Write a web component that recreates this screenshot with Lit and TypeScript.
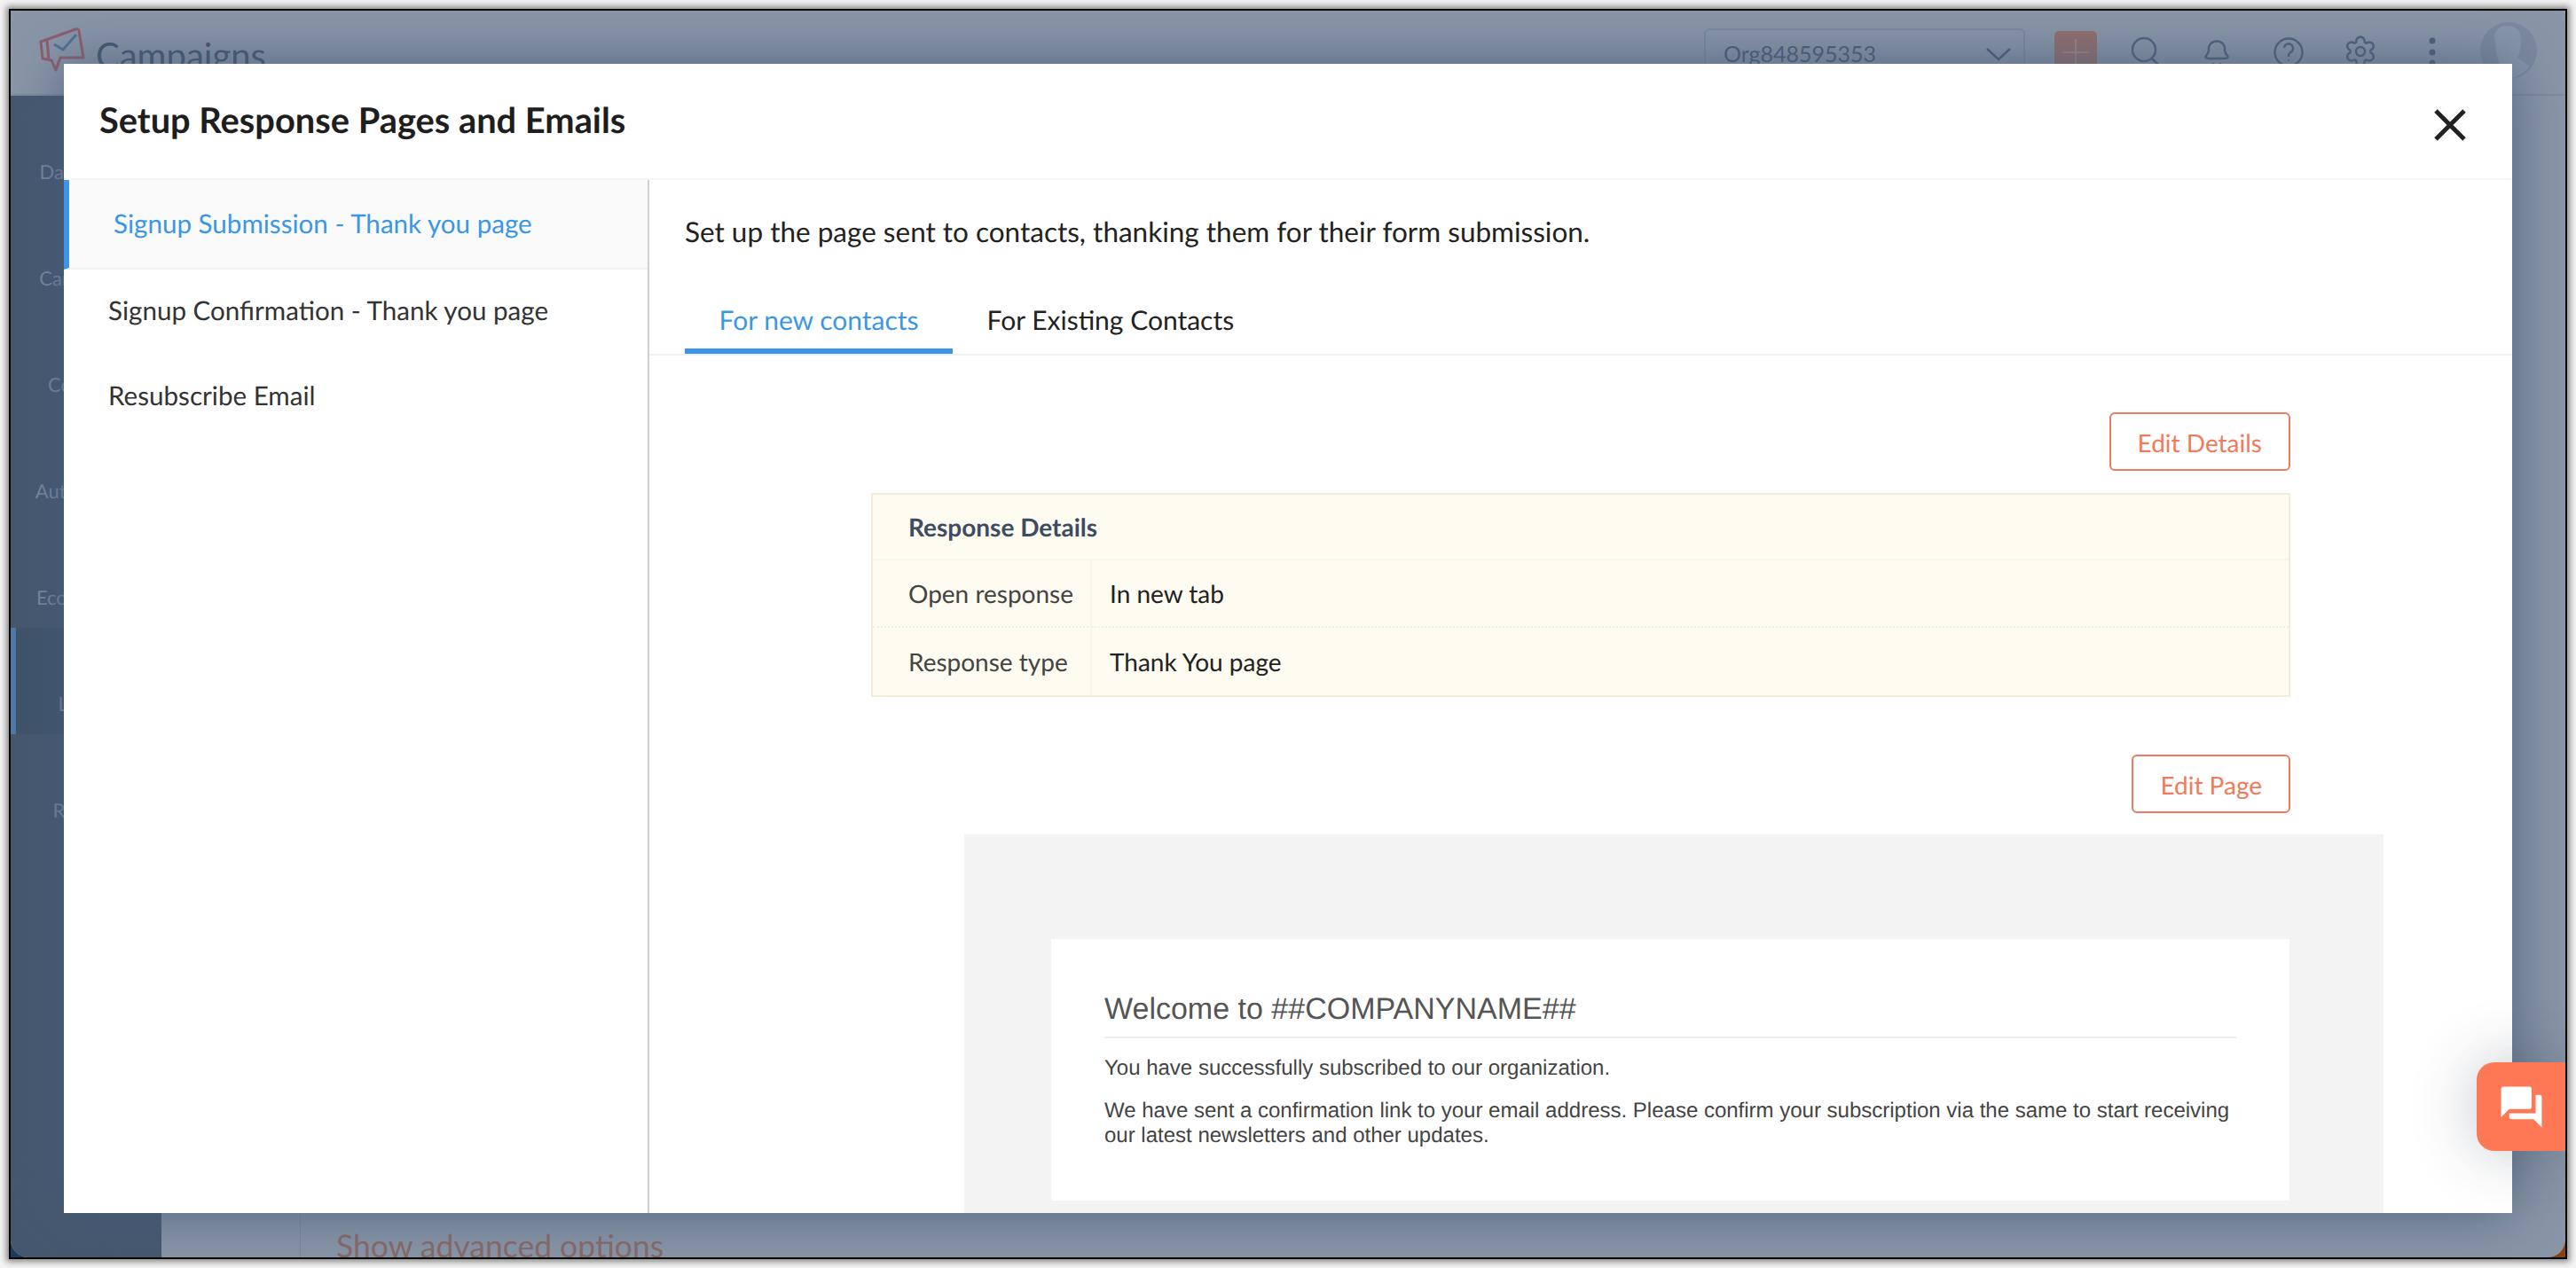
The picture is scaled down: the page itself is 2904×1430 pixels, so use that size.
import { html, css, svg, LitElement } from 'lit';
import { customElement } from 'lit/decorators.js';

const NAV = [
  { label: 'Dashboard' },
  { label: 'Campaigns' },
  { label: 'Contacts' },
  { label: 'Automation' },
  { label: 'Ecommerce' },
  { label: 'Leads', active: true },
  { label: 'Reports' },
];

const PAGES = [
  { label: 'Signup Submission - Thank you page', active: true },
  { label: 'Signup Confirmation - Thank you page' },
  { label: 'Resubscribe Email' },
];

// six lobed cog outline, centred in a 48 box
function gearPath(): string {
  const pts: string[] = [];
  const cx = 24;
  const cy = 23;
  for (let i = 0; i < 6; i++) {
    const a = (i * Math.PI) / 3 - Math.PI / 2;
    const at = (r: number, off: number) =>
      `${(cx + r * Math.cos(a + off)).toFixed(1)} ${(cy + r * Math.sin(a + off)).toFixed(1)}`;
    pts.push(`${i === 0 ? 'M' : 'L'}${at(11.5, -0.42)}`);
    pts.push(`Q${at(16.5, -0.3)} ${at(16.5, 0)}`);
    pts.push(`Q${at(16.5, 0.3)} ${at(11.5, 0.42)}`);
  }
  return pts.join(' ') + ' Z';
}

@customElement('app-root')
export class AppRoot extends LitElement {
  static override styles = css`
    :host {
      display: block;
      width: 2904px;
      height: 1430px;
      background: #f4f4f4;
      font-family: 'Lato', 'Liberation Sans', sans-serif;
      text-rendering: geometricPrecision;
      overflow: hidden;
    }

    .frame {
      width: 2880px;
      height: 1406px;
      margin: 10px;
      border: 2px solid #000;
      box-shadow: 0 0 7px 3px rgba(0, 0, 0, 0.45);
      background: linear-gradient(90deg, #1c3a5c 50%, #8a4212 50%);
    }

    .window {
      position: relative;
      display: flex;
      flex-direction: column;
      width: 100%;
      height: 100%;
      overflow: hidden;
      border-radius: 0 0 20px 20px;
      background: #8a96a8;
    }

    /* dimmed app behind the dialog */
    .topbar {
      flex: none;
      box-sizing: border-box;
      display: flex;
      align-items: center;
      height: 96px;
      padding: 0 32px;
      border-bottom: 2px solid #7d8a9e;
    }

    .logo {
      width: 56px;
      height: 56px;
      margin-right: 8px;
    }

    .brand {
      font-size: 40px;
      color: #45576f;
      margin-top: 6px;
    }

    .org {
      box-sizing: border-box;
      display: flex;
      align-items: center;
      justify-content: space-between;
      width: 362px;
      height: 54px;
      margin-left: auto;
      margin-right: 33px;
      padding: 4px 13px 0 20px;
      border: 2px solid #7d8a9f;
      border-radius: 6px;
      font-size: 25px;
      color: #4c5d76;
    }

    .plus {
      display: flex;
      width: 48px;
      height: 48px;
      margin-right: 13px;
      border-radius: 5px;
      background: #936f6c;
    }

    .cell {
      display: flex;
      justify-content: center;
      width: 81px;
    }

    .cell svg {
      width: 48px;
      height: 48px;
    }

    .avatar {
      width: 64px;
      height: 64px;
      margin-left: 14px;
      margin-top: -4px;
    }

    .below {
      flex: 1;
      display: flex;
      min-height: 0;
    }

    .nav {
      flex: none;
      width: 170px;
      background: #46586f;
    }

    .nav-item {
      box-sizing: border-box;
      display: flex;
      align-items: flex-end;
      justify-content: center;
      height: 120px;
      padding-bottom: 21px;
      font-size: 22px;
      color: #7c8aa0;
    }

    .nav-item.active {
      padding-right: 8px;
      background: #3f5369;
      box-shadow: inset 6px 0 0 #4f7aa8;
    }

    .main {
      flex: 1;
      display: flex;
      padding-left: 156px;
    }

    .main-inner {
      flex: 1;
      display: flex;
      align-items: flex-end;
      padding-left: 40px;
      border-left: 1px solid #7d899c;
      margin-bottom: -12px;
    }

    .advanced {
      font-size: 35.5px;
      line-height: 50px;
      color: #8a6a66;
    }

    /* dialog */
    .modal {
      position: absolute;
      left: 60px;
      top: 60px;
      display: flex;
      flex-direction: column;
      width: 2760px;
      height: 1296px;
      overflow: hidden;
      background: #fff;
    }

    .shadow {
      position: absolute;
      left: 60px;
      top: 60px;
      width: 2760px;
      height: 1296px;
      box-shadow: 0 0 60px rgba(70, 90, 120, 0.85);
    }

    .modal-head {
      flex: none;
      display: flex;
      align-items: center;
      justify-content: space-between;
      box-sizing: border-box;
      height: 131px;
      padding: 0 50px 0 40px;
      border-bottom: 2px solid #f3f5f6;
    }

    .modal-title {
      font-size: 39.8px;
      font-weight: 700;
      color: #1e1e1e;
      margin-bottom: 2px;
    }

    .close {
      width: 40px;
      height: 40px;
      margin-top: 8px;
    }

    .modal-body {
      flex: 1;
      display: flex;
      min-height: 0;
    }

    .pages {
      flex: none;
      box-sizing: border-box;
      width: 660px;
      border-right: 2px solid #cfcfcf;
    }

    .page {
      display: flex;
      align-items: center;
      box-sizing: border-box;
      height: 96px;
      padding: 0 0 4px 50px;
      font-size: 29.6px;
      color: #333;
    }

    .page.active {
      height: 101px;
      padding-bottom: 0;
      border-left: 6px solid #3b95e8;
      border-bottom: 2px solid #f1f1f1;
      background: #fafafa;
      color: #3a97e6;
    }

    .pane {
      flex: 1;
      display: flex;
      flex-direction: column;
      min-width: 0;
      padding-top: 38px;
    }

    .intro {
      margin: 0 0 45px 40px;
      font-size: 31.5px;
      line-height: 40px;
      color: #222;
    }

    .tabs {
      flex: none;
      display: flex;
      padding-left: 40px;
      border-bottom: 2px solid #f0f0f2;
    }

    .tab {
      box-sizing: border-box;
      height: 73px;
      padding: 15px 38.5px 12px;
      border-bottom: 6px solid transparent;
      font-size: 30px;
      line-height: 40px;
      color: #222;
    }

    .tab.active {
      border-bottom-color: #3b95e8;
      color: #3a97e6;
    }

    .actions {
      flex: none;
      display: flex;
      justify-content: flex-end;
      padding-right: 250px;
    }

    .actions.first {
      margin-top: 64px;
    }

    .actions.second {
      margin-top: 65px;
    }

    .btn {
      display: flex;
      align-items: center;
      box-sizing: border-box;
      height: 66px;
      padding: 2px 30px 0;
      border: 2px solid #ec7a60;
      border-radius: 6px;
      font-size: 28px;
      color: #f07b5c;
    }

    .details {
      flex: none;
      display: grid;
      grid-template-columns: 247px 1fr;
      grid-template-rows: 74px 76px 76px;
      margin: 25px 250px 0 250px;
      border: 2px solid #f3ecd9;
      background: #fefbf1;
      font-size: 28px;
    }

    .details > div {
      display: flex;
      align-items: center;
    }

    .details-head {
      grid-column: 1 / 3;
      padding-left: 40px;
      border-bottom: 2px solid #f6f4ec;
      font-weight: 700;
      color: #3d4c63;
    }

    .label {
      padding-left: 40px;
      border-right: 2px solid #f7f5ec;
      color: #444;
    }

    .value {
      padding-left: 20px;
      color: #222;
    }

    .dotted {
      border-bottom: 2px dotted #f3efe2;
    }

    .preview {
      flex: none;
      box-sizing: border-box;
      width: 1600px;
      height: 440px;
      margin: 24px 0 0 355px;
      padding: 118px 0 0 98px;
      background: #f3f3f3;
    }

    .card {
      box-sizing: border-box;
      width: 1396px;
      height: 295px;
      padding: 59px 60px 0;
      background: #fff;
      font-family: 'Liberation Sans', Arial, sans-serif;
    }

    .card h2 {
      margin: 0;
      padding-bottom: 11px;
      border-bottom: 2px solid #eee;
      font-size: 34px;
      font-weight: 400;
      line-height: 40px;
      color: #555;
    }

    .card p {
      margin: 20px 0 0;
      font-size: 24px;
      line-height: 28px;
      color: #444;
    }

    .chat {
      position: absolute;
      left: 2780px;
      top: 1186px;
      display: flex;
      align-items: center;
      justify-content: center;
      width: 100px;
      height: 100px;
      border-radius: 20px 0 0 20px;
      background: #ff7855;
      box-shadow: 0 0 70px rgba(40, 50, 70, 0.28);
    }

    .chat svg {
      width: 55px;
      height: 55px;
      fill: #fff;
    }
  `;

  private renderTopbar() {
    return html`
      <div class="topbar">
        <svg class="logo" viewBox="0 0 56 56" fill="none" stroke-width="3" stroke-linejoin="round">
          <path d="M2 16 L41 2 Q45 1 45 4 L50 34 L24 34 L19 48 L14 37 L4 35 Z M9 14 L11 36" stroke="#8f5e6c" />
          <path d="M17 19 L27 25 L42 8" stroke="#4f7199" />
        </svg>
        <span class="brand">Campaigns</span>
        <div class="org">
          <span>Org848595353</span>
          <svg width="30" height="18" viewBox="0 0 30 18" fill="none" stroke="#4c5d76" stroke-width="2.5">
            <path d="M2 3 L15 15 L28 3" />
          </svg>
        </div>
        <div class="plus">
          <svg width="48" height="48" viewBox="0 0 48 48" stroke="#a08c92" stroke-width="1.5">
            <path d="M9 24 H39 M24 9 V39" />
          </svg>
        </div>
        <div class="cell">
          <svg viewBox="0 0 48 48" fill="none" stroke="#51617a" stroke-width="2.5">
            <circle cx="23" cy="21" r="13" /><path d="M32 31 L41 40" />
          </svg>
        </div>
        <div class="cell">
          <svg viewBox="0 0 48 48" fill="none" stroke="#51617a" stroke-width="2.5" stroke-linejoin="round">
            <path d="M16 31 H32 Q38 31 36 28 Q34 26 33 22 V18 A9.500 9.500 0 0 0 15 18 V22 Q14 26 12 28 Q10 31 16 31 Z M20 36 V38 M28 36 V38" />
          </svg>
        </div>
        <div class="cell">
          <svg viewBox="0 0 48 48" fill="none" stroke="#51617a" stroke-width="2.5">
            <circle cx="24" cy="24" r="15.500" />
            <path d="M19 19 A5 5 0 1 1 26 24 Q24 25 24 29" />
            <circle cx="24" cy="33" r="1" fill="#51617a" stroke="none" />
          </svg>
        </div>
        <div class="cell">
          <svg viewBox="0 0 48 48" fill="none" stroke="#51617a" stroke-width="2.5" stroke-linejoin="round">
            <path d=${gearPath()} /><circle cx="24" cy="23" r="5" />
          </svg>
        </div>
        <div class="cell">
          <svg viewBox="0 0 48 48" fill="#4e5e77">
            <circle cx="24" cy="11" r="3.500" /><circle cx="24" cy="24" r="3.500" /><circle cx="24" cy="36" r="3.500" />
          </svg>
        </div>
        <svg class="avatar" viewBox="0 0 64 64">
          <circle cx="32" cy="32" r="32" fill="#7c899e" />
          <path d="M16 16 Q18 4 30 4 Q46 4 46 20 Q46 32 42 40 L56 50 Q45 62 32 64 Q20 50 18 32 Z" fill="#8996aa" />
        </svg>
      </div>
    `;
  }

  private renderDialog() {
    return html`
      <div class="shadow"></div>
      <div class="modal">
        <div class="modal-head">
          <div class="modal-title">Setup Response Pages and Emails</div>
          <svg class="close" viewBox="0 0 40 40" stroke="#222" stroke-width="5">
            ${svg`<path d="M4 4 L36 36 M36 4 L4 36" />`}
          </svg>
        </div>
        <div class="modal-body">
          <div class="pages">
            ${PAGES.map(p => html`<div class="page ${p.active ? 'active' : ''}">${p.label}</div>`)}
          </div>
          <div class="pane">
            <div class="intro">Set up the page sent to contacts, thanking them for their form submission.</div>
            <div class="tabs">
              <div class="tab active">For new contacts</div>
              <div class="tab">For Existing Contacts</div>
            </div>
            <div class="actions first"><div class="btn">Edit Details</div></div>
            <div class="details">
              <div class="details-head">Response Details</div>
              <div class="label dotted">Open response</div>
              <div class="value dotted">In new tab</div>
              <div class="label">Response type</div>
              <div class="value">Thank You page</div>
            </div>
            <div class="actions second"><div class="btn">Edit Page</div></div>
            <div class="preview">
              <div class="card">
                <h2>Welcome to ##COMPANYNAME##</h2>
                <p>You have successfully subscribed to our organization.</p>
                <p>
                  We have sent a confirmation link to your email address. Please confirm your subscription via
                  the same to start receiving our latest newsletters and other updates.
                </p>
              </div>
            </div>
          </div>
        </div>
      </div>
    `;
  }

  override render() {
    return html`
      <div class="frame">
        <div class="window">
          ${this.renderTopbar()}
          <div class="below">
            <div class="nav">
              ${NAV.map(n => html`<div class="nav-item ${n.active ? 'active' : ''}">${n.label}</div>`)}
            </div>
            <div class="main">
              <div class="main-inner"><span class="advanced">Show advanced options</span></div>
            </div>
          </div>
          ${this.renderDialog()}
          <div class="chat">
            <svg viewBox="0 0 24 24">
              <path d="M21 6h-2v9H6v2c0 .55.45 1 1 1h11l4 4V7c0-.55-.45-1-1-1zm-4 6V3c0-.55-.45-1-1-1H3c-.55 0-1 .45-1 1v14l4-4h10c.55 0 1-.45 1-1z" />
            </svg>
          </div>
        </div>
      </div>
    `;
  }
}
